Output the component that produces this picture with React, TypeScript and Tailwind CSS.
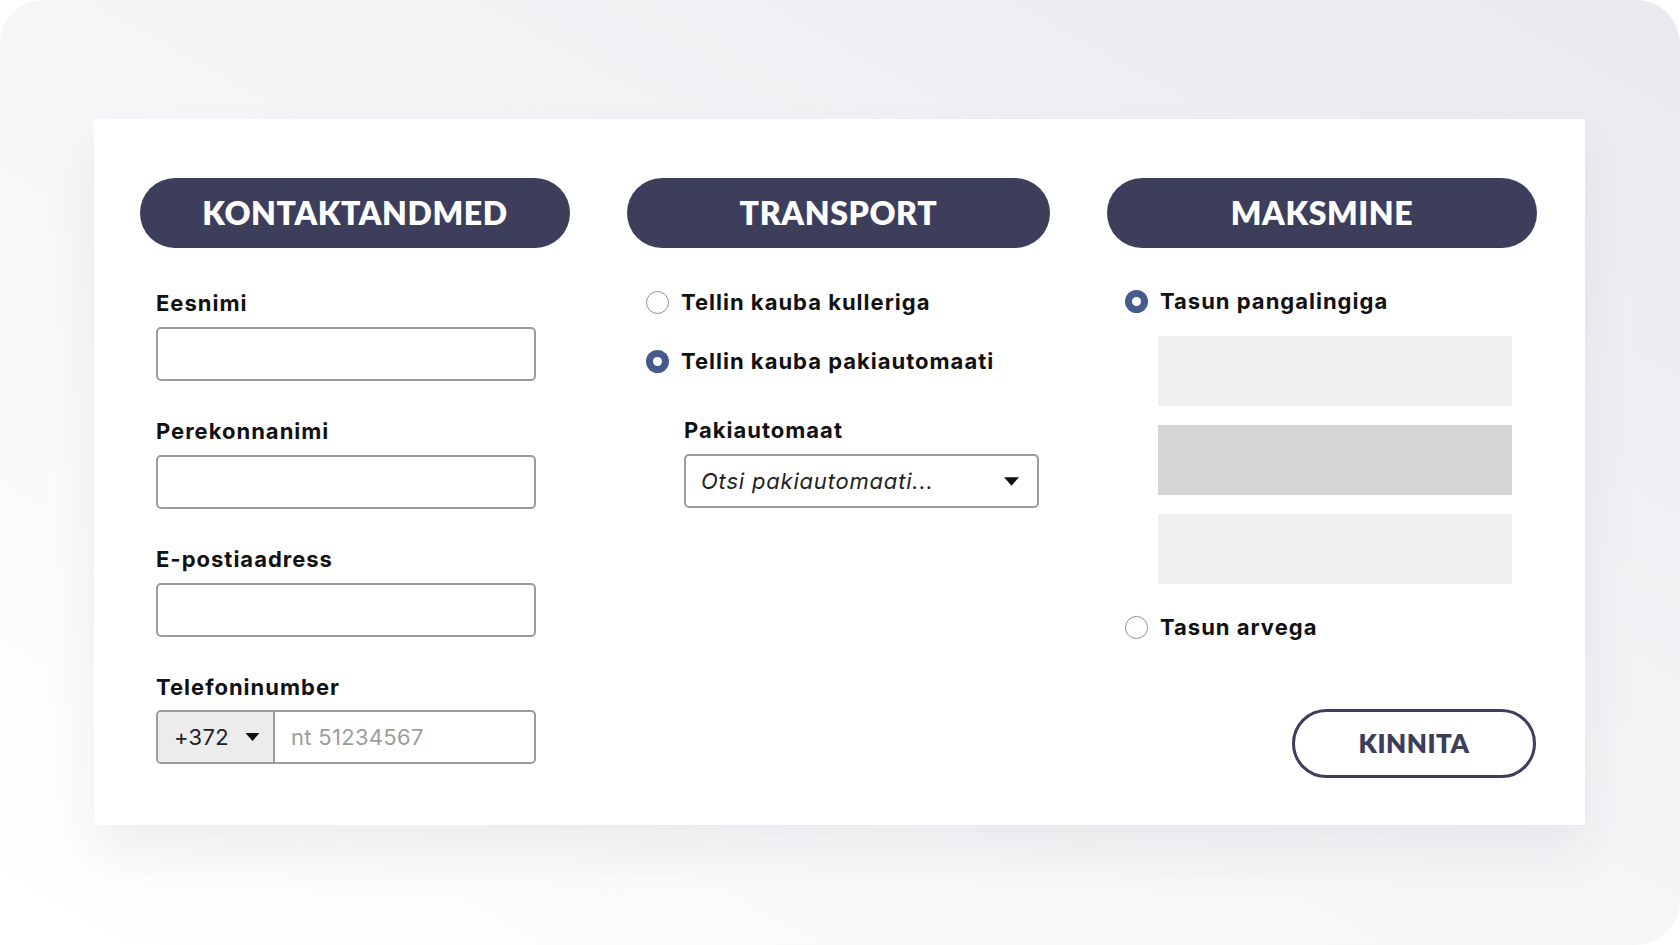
import React, { useState } from "react";

const headFont = { fontFamily: "Lato, 'Open Sans', sans-serif" };
const bodyFont = { fontFamily: "Inter, 'Open Sans', sans-serif" };

const contactFields = ["Eesnimi", "Perekonnanimi", "E-postiaadress"];

const Caret = ({ className = "" }: { className?: string }) => (
  <svg viewBox="0 0 14 8" className={className} fill="currentColor">
    <path d="M0 0h14L7 8z" />
  </svg>
);

const Radio = ({ checked }: { checked: boolean }) =>
  checked ? (
    <span className="size-[23px] rounded-full bg-[#465a8b] flex items-center justify-center shrink-0">
      <span className="size-[9px] rounded-full bg-white" />
    </span>
  ) : (
    <span className="size-[23px] rounded-full border-[1.5px] border-[#8a8eab] bg-white shrink-0" />
  );

const Pill = ({ title }: { title: string }) => (
  <div className="h-[70px] rounded-full bg-[#3c3e5b] flex items-center justify-center">
    <h2
      className="text-white text-[32px] font-extrabold tracking-[0.6px] leading-none"
      style={headFont}
    >
      {title}
    </h2>
  </div>
);

const labelCls =
  "block text-[22px] font-bold leading-[28px] tracking-[1px] text-[#111]";

export default function App() {
  const [transport, setTransport] = useState(1);
  const [payment, setPayment] = useState(0);

  return (
    <div className="bg-white w-[1680px] h-[945px]" style={bodyFont}>
      <div className="h-full rounded-[44px] bg-linear-to-tr from-white via-[#f6f6f8] to-[#e9e9ef] pt-[119px] pl-[94px]">
        <div className="w-[1491px] h-[706px] bg-white shadow-[0_28px_50px_rgba(40,40,70,0.07)] pt-[59px] pl-[46px] grid grid-cols-[430px_423px_430px] gap-x-[57px] content-start">
          {/* kontaktandmed */}
          <div>
            <Pill title="KONTAKTANDMED" />
            <div className="pl-4 pt-[41px] flex flex-col gap-[36px]">
              {contactFields.map((label) => (
                <div key={label}>
                  <label className={`${labelCls} mb-[10px]`}>{label}</label>
                  <input className="w-[380px] h-[54px] rounded-[5px] border-2 border-[#9b9b9b] bg-white outline-none" />
                </div>
              ))}
              <div>
                <label className={`${labelCls} mb-[9px]`}>Telefoninumber</label>
                <div className="w-[380px] h-[54px] rounded-[5px] border-2 border-[#9b9b9b] flex overflow-hidden">
                  <div className="w-[117px] shrink-0 bg-[#ececec] border-r-2 border-[#9b9b9b] flex items-center pl-[16px] gap-[16px] text-[22px] tracking-[0.3px] text-[#222]">
                    +372
                    <Caret className="w-[15px] h-[8px] text-[#111]" />
                  </div>
                  <input
                    placeholder="nt 51234567"
                    className="flex-1 min-w-0 px-4 text-[22px] tracking-[0.3px] text-[#222] placeholder:text-[#9d9d9d] outline-none"
                    style={bodyFont}
                  />
                </div>
              </div>
            </div>
          </div>

          {/* transport */}
          <div>
            <Pill title="TRANSPORT" />
            <div className="pl-[19px] pt-[40px] flex flex-col gap-[31px]">
              {["Tellin kauba kulleriga", "Tellin kauba pakiautomaati"].map((t, i) => (
                <button
                  key={t}
                  onClick={() => setTransport(i)}
                  className={`flex items-center gap-3 ${labelCls}`}
                >
                  <Radio checked={transport === i} />
                  {t}
                </button>
              ))}
            </div>
            <div className="pl-[57px] pt-[41px]">
              <label className={`${labelCls} mb-[10px]`}>Pakiautomaat</label>
              <div className="w-[355px] h-[54px] rounded-[5px] border-2 border-[#9b9b9b] flex items-center justify-between pl-[15px] pr-[18px]">
                <span className="italic text-[22px] tracking-[0.8px] text-[#222]">
                  Otsi pakiautomaati...
                </span>
                <Caret className="w-[15px] h-[9px] text-[#111]" />
              </div>
            </div>
          </div>

          {/* maksmine */}
          <div className="flex flex-col">
            <Pill title="MAKSMINE" />
            <button
              onClick={() => setPayment(0)}
              className={`ml-[18px] mt-[39px] flex items-center gap-3 ${labelCls}`}
            >
              <Radio checked={payment === 0} />
              Tasun pangalingiga
            </button>
            <div className="ml-[51px] mt-[21px] flex flex-col gap-[19px]">
              <div className="w-[354px] h-[70px] bg-[#efefef]" />
              <div className="w-[354px] h-[70px] bg-[#d5d5d5]" />
              <div className="w-[354px] h-[70px] bg-[#efefef]" />
            </div>
            <button
              onClick={() => setPayment(1)}
              className={`ml-[18px] mt-[29px] flex items-center gap-3 ${labelCls}`}
            >
              <Radio checked={payment === 1} />
              Tasun arvega
            </button>
            <button
              className="self-end mr-[1px] mt-[68px] w-[244px] h-[69px] rounded-full border-[3px] border-[#3c3e5b] text-[#3c3e5b] text-[26px] font-extrabold tracking-[0.5px]"
              style={headFont}
            >
              KINNITA
            </button>
          </div>
        </div>
      </div>
    </div>
  );
}
